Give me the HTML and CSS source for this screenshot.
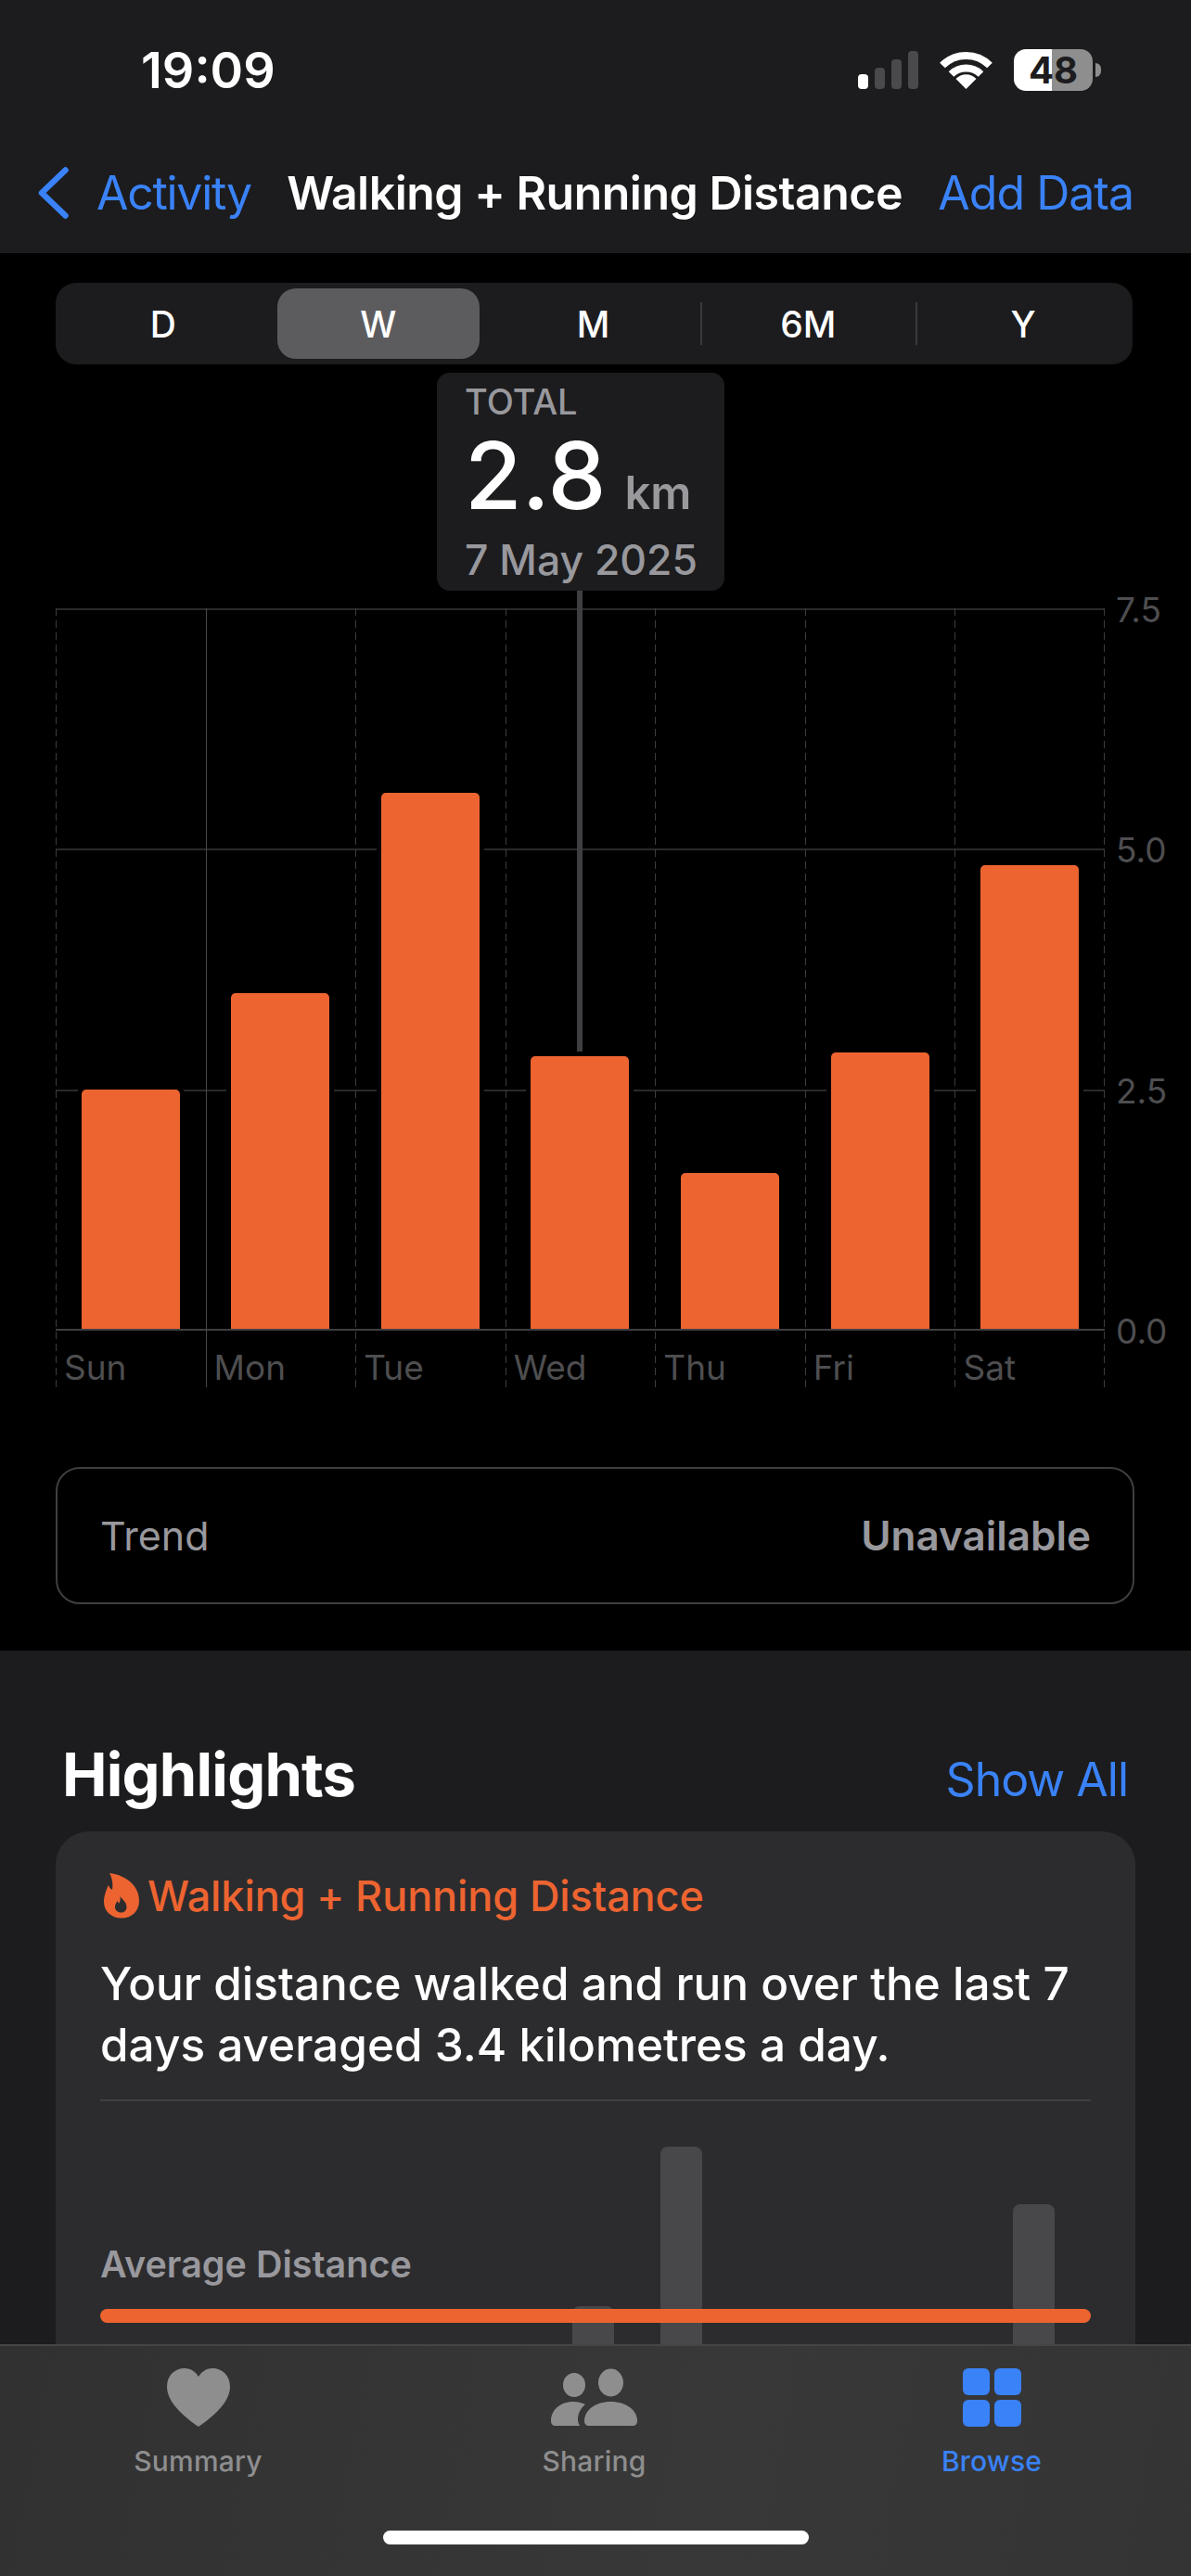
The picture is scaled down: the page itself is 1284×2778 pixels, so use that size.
FILE: index.html
```html
<!DOCTYPE html>
<html lang="en">
<head>
  <meta charset="UTF-8">
  <meta name="viewport" content="width=device-width, initial-scale=1.0">
  <title>Walking + Running Distance</title>
  <link rel="stylesheet" href="styles.css">
</head>
<body>
  <div class="screen">
    <header class="top-bar">
      <div class="status-bar">
        <span class="time">19:09</span>
        <div class="status-icons">
          <svg class="signal" width="65" height="41" viewBox="0 0 65 41">
            <rect x="0" y="25" width="11" height="16" rx="4" fill="#fff"/>
            <rect x="18" y="18" width="11" height="23" rx="4" fill="#4a4a4c"/>
            <rect x="36" y="9" width="11" height="32" rx="4" fill="#4a4a4c"/>
            <rect x="54" y="0" width="11" height="41" rx="4" fill="#4a4a4c"/>
          </svg>
          <svg class="wifi" width="57" height="42" viewBox="0 0 57 42">
            <path d="M3 16.5 A36 36 0 0 1 54 16.5" fill="none" stroke="#fff" stroke-width="8"/>
            <path d="M12.5 26 A23 23 0 0 1 44.5 26" fill="none" stroke="#fff" stroke-width="8"/>
            <path d="M28.5 42 L17.5 31 A15 15 0 0 1 39.5 31 Z" fill="#fff"/>
          </svg>
          <div class="battery"><span>48</span></div>
          <div class="battery-nub"></div>
        </div>
      </div>
      <nav class="nav-bar">
        <a class="back">
          <svg width="33" height="56" viewBox="0 0 33 56">
            <path d="M29.5 3.5 L4 28 L29.5 52.5" fill="none" stroke="#3a82f7" stroke-width="6.5" stroke-linecap="round" stroke-linejoin="round"/>
          </svg>
          <span>Activity</span>
        </a>
        <h1>Walking + Running Distance</h1>
        <a class="link">Add Data</a>
      </nav>
    </header>

    <main>
      <section class="chart-section">
        <div class="segments">
          <div class="segment">D</div>
          <div class="segment selected">W</div>
          <div class="segment">M</div>
          <div class="segment divided">6M</div>
          <div class="segment divided">Y</div>
        </div>

        <div class="readout">
          <div class="readout-label">TOTAL</div>
          <div class="readout-value"><span>2.8</span><small>km</small></div>
          <div class="readout-date">7 May 2025</div>
          <div class="readout-line"></div>
        </div>

        <div class="chart">
          <div class="plot">
            <div class="grid-line line-75"></div>
            <div class="grid-line line-50"></div>
            <div class="grid-line line-25"></div>
            <div class="grid-line line-0"></div>
            <div class="day"><div class="day-plot"><div class="bar" style="height:33.3%"></div></div><div class="day-label">Sun</div></div>
            <div class="day solid"><div class="day-plot"><div class="bar" style="height:46.6%"></div></div><div class="day-label">Mon</div></div>
            <div class="day"><div class="day-plot"><div class="bar" style="height:74.4%"></div></div><div class="day-label">Tue</div></div>
            <div class="day"><div class="day-plot"><div class="bar" style="height:37.9%"></div></div><div class="day-label">Wed</div></div>
            <div class="day"><div class="day-plot"><div class="bar" style="height:21.7%"></div></div><div class="day-label">Thu</div></div>
            <div class="day"><div class="day-plot"><div class="bar" style="height:38.4%"></div></div><div class="day-label">Fri</div></div>
            <div class="day last"><div class="day-plot"><div class="bar" style="height:64.4%"></div></div><div class="day-label">Sat</div></div>
          </div>
          <div class="y-axis">
            <span>7.5</span>
            <span>5.0</span>
            <span>2.5</span>
            <span>0.0</span>
          </div>
        </div>

        <div class="trend">
          <span>Trend</span>
          <strong>Unavailable</strong>
        </div>
      </section>

      <section class="highlights">
        <div class="highlights-head">
          <h2>Highlights</h2>
          <a class="link">Show All</a>
        </div>
        <div class="card">
          <div class="card-title">
            <svg width="38" height="49" viewBox="0 0 38 49">
              <path fill="#ed6431" fill-rule="evenodd" d="M6 0 C18 1 38 10 38 30 C38 41 30 48.5 19 48.5 C8 48.5 0 41 0 31 C0 24 3 18 4.5 13 C6 15 7 17 9 18 C10 12 9 5 6 0Z M17.5 24 C18 28 24.5 30 24.5 36.5 C24.5 40.5 21.5 42.5 18.5 42.5 C15 42.5 12 40 12 36.5 C12 33.5 13.5 32 14.5 30 C15 31 15.5 32 16.5 32.5 C17.5 30 18 27 17.5 24Z"/>
            </svg>
            <span>Walking + Running Distance</span>
          </div>
          <p class="card-text">Your distance walked and run over the last 7 days averaged 3.4 kilometres a day.</p>
          <div class="mini-chart">
            <div class="mini-bars">
              <div></div><div></div><div></div><div></div><div></div>
              <div class="mini-bar" style="height:77px"></div>
              <div class="mini-bar" style="height:249px"></div>
              <div></div><div></div><div></div>
              <div class="mini-bar" style="height:187px"></div>
            </div>
            <div class="average">
              <div class="average-label">Average Distance</div>
              <div class="average-line"></div>
            </div>
          </div>
        </div>
      </section>
    </main>

    <footer class="tab-bar">
      <div class="tabs">
        <div class="tab">
          <svg width="68" height="63" viewBox="0 0 68 63">
            <path fill="#8e8e8e" d="M34 63 C30 60 0 41 0 20 C0 8 8 0 19 0 C26 0 31 4 34 9 C37 4 42 0 49 0 C60 0 68 8 68 20 C68 41 38 60 34 63Z"/>
          </svg>
          <span>Summary</span>
        </div>
        <div class="tab">
          <svg width="93" height="63" viewBox="0 0 93 63">
            <g fill="#8e8e8e">
              <ellipse cx="25" cy="18" rx="12" ry="13"/>
              <ellipse cx="64.5" cy="15.5" rx="13.5" ry="15"/>
              <path d="M36 57 C36 45 48 36 64.5 36 C81 36 93 45 93 57 C93 60 91 62 88 62 H41 C38 62 36 60 36 57Z"/>
              <path d="M0 57 C0 45 10 36 24 36 C29 36 33 37 37 39 C32 43 29 49 29 55 C29 58 30 60 31 62 H5 C2 62 0 60 0 57Z"/>
            </g>
          </svg>
          <span>Sharing</span>
        </div>
        <div class="tab active">
          <svg width="63" height="63" viewBox="0 0 63 63">
            <g fill="#3a82f7">
              <rect x="0" y="0" width="29" height="29" rx="6"/>
              <rect x="34" y="0" width="29" height="29" rx="6"/>
              <rect x="0" y="34" width="29" height="29" rx="6"/>
              <rect x="34" y="34" width="29" height="29" rx="6"/>
            </g>
          </svg>
          <span>Browse</span>
        </div>
      </div>
      <div class="home-indicator"></div>
    </footer>
  </div>
</body>
</html>
```

FILE: styles.css
```css
:root {
  --panel: #1c1c1e;
  --card: #2c2c2e;
  --blue: #3a82f7;
  --orange: #ed6431;
  --muted: #98989d;
  --dim: #4e4e50;
}

* {
  box-sizing: border-box;
  margin: 0;
  padding: 0;
}

body {
  background: #000;
  font-family: Inter, "Liberation Sans", sans-serif;
  color: #fff;
}

.screen {
  position: relative;
  width: 1284px;
  height: 2778px;
  overflow: hidden;
}

/* top bar */
.top-bar {
  height: 273px;
  background: var(--panel);
}

.status-bar {
  display: flex;
  justify-content: space-between;
  align-items: center;
  height: 150px;
  padding: 0 97px 0 152px;
}

.time {
  font-size: 54px;
  font-weight: 600;
}

.status-icons {
  display: flex;
  align-items: center;
}

.signal {
  margin-right: 23px;
}

.wifi {
  margin-right: 23px;
}

.battery {
  width: 85px;
  height: 45px;
  border-radius: 13px;
  background: linear-gradient(to right, #fff 48%, #8e8e8e 48%);
  color: var(--panel);
  font-size: 40px;
  font-weight: 700;
  line-height: 45px;
  text-align: center;
}

.battery-nub {
  width: 6px;
  height: 15px;
  margin-left: 3px;
  border-radius: 0 8px 8px 0;
  background: #8e8e8e;
}

.nav-bar {
  display: flex;
  justify-content: space-between;
  align-items: center;
  height: 116px;
  padding: 0 62px 0 41px;
}

.back {
  display: flex;
  align-items: center;
  gap: 30px;
  color: var(--blue);
  font-size: 50px;
  letter-spacing: -1.3px;
}

.nav-bar h1 {
  font-size: 50px;
  font-weight: 600;
  letter-spacing: -0.5px;
}

.link {
  color: var(--blue);
  font-size: 50px;
  letter-spacing: -1px;
}

/* chart area */
.chart-section {
  position: relative;
  padding: 32px 0 50px 60px;
}

.segments {
  display: flex;
  width: 1161px;
  height: 88px;
  padding: 6px 2px 6px 0;
  border-radius: 22px;
  background: var(--panel);
  isolation: isolate;
}

.segment {
  position: relative;
  flex: 1;
  display: flex;
  align-items: center;
  justify-content: center;
  font-size: 39px;
  font-weight: 500;
}

.segment.selected::after {
  content: "";
  position: absolute;
  inset: 0 7px;
  background: #5c5c5f;
  border-radius: 20px;
  z-index: -1;
}

.segment.divided::before {
  content: "";
  position: absolute;
  left: 0;
  top: 15px;
  bottom: 15px;
  width: 2px;
  background: #3a3a3c;
}

.readout {
  position: absolute;
  left: 471px;
  top: 129px;
  width: 310px;
  height: 235px;
  padding: 7px 0 0 30px;
  border-radius: 14px;
  background: var(--panel);
  z-index: 3;
}

.readout-label {
  color: var(--muted);
  font-size: 38px;
  font-weight: 500;
  line-height: 48px;
}

.readout-value {
  display: flex;
  align-items: baseline;
  gap: 20px;
  font-size: 100px;
  font-weight: 500;
  line-height: 112px;
}

.readout-value small {
  color: var(--muted);
  font-size: 49px;
  font-weight: 600;
}

.readout-date {
  margin-top: -14px;
  color: var(--muted);
  font-size: 44.5px;
  font-weight: 500;
  line-height: 60px;
  white-space: nowrap;
}

.readout-line {
  position: absolute;
  left: 151px;
  top: 235px;
  width: 6px;
  height: 497px;
  background: #3f3f41;
}

.chart {
  display: flex;
  margin-top: 263px;
}

.plot {
  position: relative;
  display: grid;
  grid-template-columns: repeat(7, 1fr);
  width: 1131px;
}

.grid-line {
  position: absolute;
  left: 0;
  right: 0;
  height: 2px;
  background: #2a2a2c;
}

.line-75 { top: 0; }
.line-50 { top: 259px; }
.line-25 { top: 519px; }
.line-0 {
  top: 777px;
  background: #3f3f41;
  z-index: 2;
}

.day {
  position: relative;
  background-image: repeating-linear-gradient(to bottom, #3d3d3f 0 8px, transparent 8px 13px);
  background-size: 1px 100%;
  background-repeat: no-repeat;
}

.day.solid {
  background-image: linear-gradient(#4a4a4c, #4a4a4c);
}

.day.last::after {
  content: "";
  position: absolute;
  top: 0;
  bottom: 0;
  right: 0;
  width: 1px;
  background-image: repeating-linear-gradient(to bottom, #3d3d3f 0 8px, transparent 8px 13px);
}

.day-plot {
  display: flex;
  justify-content: center;
  align-items: flex-end;
  height: 778px;
}

.bar {
  position: relative;
  width: 106px;
  border-radius: 5px 5px 0 0;
  background: var(--orange);
  box-shadow: 0 0 0 5px #000;
  z-index: 1;
}

.day-label {
  height: 62px;
  padding: 18px 0 0 9px;
  color: var(--dim);
  font-size: 37px;
  line-height: 46px;
}

.y-axis {
  display: flex;
  flex-direction: column;
  justify-content: space-between;
  height: 778px;
  padding-left: 12px;
  color: var(--dim);
  font-size: 37px;
}

.y-axis span {
  height: 0;
  line-height: 4px;
}

.trend {
  display: flex;
  justify-content: space-between;
  align-items: center;
  width: 1163px;
  height: 148px;
  margin-top: 86px;
  padding: 0 45px 0 46px;
  border: 2px solid #3f3f41;
  border-radius: 26px;
  color: var(--muted);
  font-size: 44px;
}

.trend span {
  font-size: 43px;
}

.trend strong {
  font-weight: 600;
}

/* highlights */
.highlights {
  height: 1000px;
  padding: 96px 60px 0;
  background: var(--panel);
}

.highlights-head {
  display: flex;
  justify-content: space-between;
  align-items: baseline;
  padding: 0 8px 0 7px;
}

.highlights-head h2 {
  font-size: 65px;
  font-weight: 700;
  letter-spacing: -0.8px;
  line-height: 76px;
}

.card {
  height: 800px;
  margin-top: 23px;
  padding: 34px 48px 0;
  border-radius: 36px;
  background: var(--card);
}

.card-title {
  display: flex;
  align-items: center;
  gap: 9px;
  height: 70px;
  padding: 0 0 0 4px;
  color: var(--orange);
  font-size: 45px;
  font-weight: 500;
  letter-spacing: -0.1px;
}

.card-text {
  margin-top: 27px;
  font-size: 49.5px;
  font-weight: 500;
  line-height: 66px;
}

.mini-chart {
  position: relative;
  height: 300px;
  margin-top: 26px;
  border-top: 2px solid #3f3f41;
}

.mini-bars {
  display: grid;
  grid-template-columns: repeat(11, 95px);
  justify-items: center;
  align-items: end;
  height: 100%;
  margin-left: 9px;
}

.mini-bar {
  width: 45px;
  border-radius: 8px 8px 0 0;
  background: #48484a;
}

.average {
  position: absolute;
  left: 0;
  right: 0;
  top: 152px;
}

.average-label {
  color: var(--muted);
  font-size: 39.5px;
  font-weight: 600;
  line-height: 48px;
}

.average-line {
  height: 15px;
  margin-top: 24px;
  border-radius: 8px;
  background: var(--orange);
}

/* tab bar */
.tab-bar {
  position: absolute;
  left: 0;
  right: 0;
  bottom: 0;
  height: 250px;
  padding-top: 24px;
  border-top: 2px solid #454547;
  background: linear-gradient(100deg, #313132, #383838 60%, #343435);
  z-index: 4;
}

.tabs {
  display: grid;
  grid-template-columns: 427px 427px 430px;
}

.tab {
  display: flex;
  flex-direction: column;
  align-items: center;
  gap: 19px;
  color: #8e8e8e;
  font-size: 30px;
  font-weight: 500;
  letter-spacing: 0.2px;
}

.tab.active {
  color: var(--blue);
}

.home-indicator {
  width: 459px;
  height: 15px;
  margin: 57px 0 0 413px;
  border-radius: 8px;
  background: #fff;
}
```
